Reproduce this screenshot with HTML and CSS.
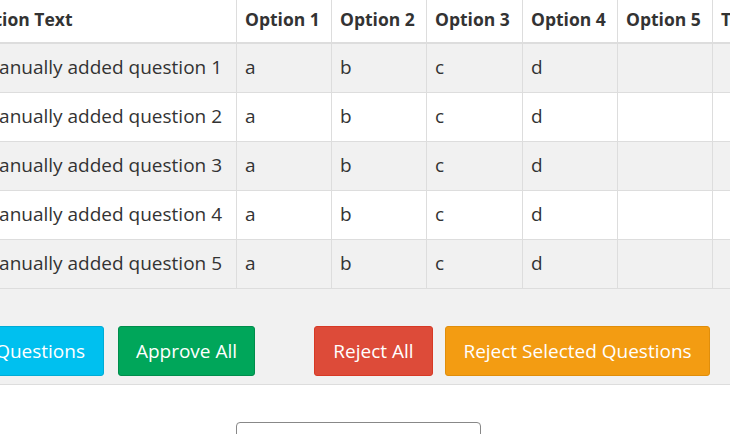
FILE: index.html
```html
<!DOCTYPE html>
<html>
<head>
<meta charset="utf-8">
<link rel="stylesheet" href="styles.css">
</head>
<body>
<div class="viewport">
  <div class="box">
    <div class="table-scroll">
      <table class="qtable">
        <colgroup>
          <col class="c-q"><col class="c-o"><col class="c-o"><col class="c-o4"><col class="c-o"><col class="c-o"><col class="c-t">
        </colgroup>
        <thead>
          <tr>
            <th class="q-head">Question Text</th>
            <th>Option 1</th>
            <th>Option 2</th>
            <th>Option 3</th>
            <th>Option 4</th>
            <th>Option 5</th>
            <th>Type</th>
          </tr>
        </thead>
        <tbody>
          <tr class="odd"><td class="q-cell">Manually added question 1</td><td>a</td><td>b</td><td>c</td><td>d</td><td></td><td></td></tr>
          <tr><td class="q-cell">Manually added question 2</td><td>a</td><td>b</td><td>c</td><td>d</td><td></td><td></td></tr>
          <tr class="odd"><td class="q-cell">Manually added question 3</td><td>a</td><td>b</td><td>c</td><td>d</td><td></td><td></td></tr>
          <tr><td class="q-cell">Manually added question 4</td><td>a</td><td>b</td><td>c</td><td>d</td><td></td><td></td></tr>
          <tr class="odd"><td class="q-cell">Manually added question 5</td><td>a</td><td>b</td><td>c</td><td>d</td><td></td><td></td></tr>
        </tbody>
      </table>
    </div>
    <div class="box-footer">
      <button class="btn btn-info">Approve Selected Questions</button>
      <button class="btn btn-success">Approve All</button>
      <button class="btn btn-danger">Reject All</button>
      <button class="btn btn-warning">Reject Selected Questions</button>
    </div>
  </div>
  <div class="below">
    <div class="field"></div>
  </div>
</div>
</body>
</html>
```
FILE: styles.css
```css
html, body {
  margin: 0;
  padding: 0;
  background: #ffffff;
  overflow: hidden;
}
body {
  font-family: "Open Sans", "Liberation Sans", sans-serif;
  color: #333333;
  font-size: 19px;
}
.viewport {
  width: 730px;
  height: 434px;
  overflow: hidden;
}
.box {
  background: #f1f1f1;
  border-bottom: 1px solid #dddddd;
  margin-top: -5px;
}
.table-scroll {
  margin-left: -60px;
}
.qtable {
  border-collapse: collapse;
  table-layout: fixed;
  width: 886px;
}
.c-q { width: 296px; }
.c-o { width: 95px; }
.c-o4 { width: 96px; }
.c-t { width: 114px; }
.qtable th, .qtable td {
  border: 1px solid #dddddd;
  text-align: left;
  white-space: nowrap;
  overflow: hidden;
  line-height: 24px;
  padding: 11px 8px 13px 8px;
}
.qtable th {
  font-weight: 700;
  font-size: 17.5px;
  background: #ffffff;
  padding-top: 12px;
  padding-bottom: 11px;
  border-bottom: 2px solid #dddddd;
  border-top: none;
}
.qtable tbody tr { background: #ffffff; }
.qtable tbody tr.odd { background: #f1f1f1; }
.q-head { padding-left: 9px !important; }
.q-cell { padding-left: 41px !important; }
.box-footer {
  display: flex;
  align-items: center;
  padding: 37px 0 8px 0;
  margin-left: -176px;
}
.btn {
  font-family: inherit;
  font-size: 19px;
  color: #ffffff;
  height: 50px;
  border-radius: 3px;
  border: 1px solid transparent;
  padding: 0;
  text-align: center;
  white-space: nowrap;
}
.btn-info { background: #00c0ef; border-color: #00acd6; width: 280px; text-align: right; padding-right: 18px; }
.btn-success { background: #00a65a; border-color: #008d4c; width: 137px; margin-left: 14px; }
.btn-danger { background: #dd4b39; border-color: #d73925; width: 119px; margin-left: 59px; }
.btn-warning { background: #f39c12; border-color: #e08e0b; width: 265px; margin-left: 12px; }
.below {
  padding: 37px 0 0 236px;
}
.field {
  width: 243px;
  height: 40px;
  border: 1px solid #888888;
  border-radius: 4px;
}
```
